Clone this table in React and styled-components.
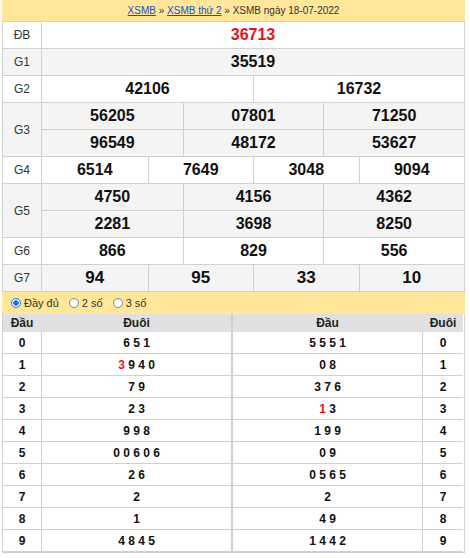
import React from 'react';
import styled, { createGlobalStyle } from 'styled-components';

const GlobalStyle = createGlobalStyle`
  body {
    margin: 0;
    background: #fff;
    font-family: "Liberation Sans", Arial, sans-serif;
  }
`;

const prizes = [
  { label: 'ĐB', rows: [['36713']], special: true },
  { label: 'G1', rows: [['35519']] },
  { label: 'G2', rows: [['42106', '16732']] },
  { label: 'G3', rows: [['56205', '07801', '71250'], ['96549', '48172', '53627']] },
  { label: 'G4', rows: [['6514', '7649', '3048', '9094']] },
  { label: 'G5', rows: [['4750', '4156', '4362'], ['2281', '3698', '8250']] },
  { label: 'G6', rows: [['866', '829', '556']] },
  { label: 'G7', rows: [['94', '95', '33', '10']], big: true },
];

// red marks the special-prize tail
const loto = [
  ['6 5 1', '5 5 5 1'],
  [[{ t: '3', red: true }, ' 9 4 0'], '0 8'],
  ['7 9', '3 7 6'],
  ['2 3', [{ t: '1', red: true }, ' 3']],
  ['9 9 8', '1 9 9'],
  ['0 0 6 0 6', '0 9'],
  ['2 6', '0 5 6 5'],
  ['2', '2'],
  ['1', '4 9'],
  ['4 8 4 5', '1 4 4 2'],
];

const App = () => (
  <>
    <GlobalStyle />
    <Wrap>
      <TopBar>
        <a href="#">XSMB</a> » <a href="#">XSMB thứ 2</a> » XSMB ngày 18-07-2022
      </TopBar>
      <Prizes>
        {prizes.map((p, i) => (
          <Prize key={p.label} $alt={i % 2 === 1}>
            <Label>{p.label}</Label>
            <Values>
              {p.rows.map((r, j) => (
                <ValueRow key={j} $cols={r.length}>
                  {r.map((v, k) => (
                    <Num key={k} $red={p.special} $big={p.big}>{v}</Num>
                  ))}
                </ValueRow>
              ))}
            </Values>
          </Prize>
        ))}
      </Prizes>
      <Options>
        <Opt><Radio $checked />Đầy đủ</Opt>
        <Opt><Radio />2 số</Opt>
        <Opt><Radio />3 số</Opt>
      </Options>
      <Loto>
        <LotoHead>Đầu</LotoHead>
        <LotoHead $mid>Đuôi</LotoHead>
        <LotoHead>Đầu</LotoHead>
        <LotoHead>Đuôi</LotoHead>
        {loto.map((row, i) => (
          <React.Fragment key={i}>
            <LotoCell>{i}</LotoCell>
            <LotoCell $mid>{renderDigits(row[0])}</LotoCell>
            <LotoCell>{renderDigits(row[1])}</LotoCell>
            <LotoCell>{i}</LotoCell>
          </React.Fragment>
        ))}
      </Loto>
    </Wrap>
  </>
);

const renderDigits = (v) =>
  typeof v === 'string'
    ? v
    : v.map((part, i) =>
        typeof part === 'string' ? part : <Red key={i}>{part.t}</Red>
      );

export default App;

const Wrap = styled.div`
  width: 463px;
  margin-left: 2px;
`;

const TopBar = styled.div`
  height: 21px;
  line-height: 22px;
  background: #ffe699;
  text-align: center;
  font-size: 10px;
  color: #333;

  a {
    color: #1a4fc4;
    text-decoration: underline;
  }
`;

const Prizes = styled.div`
  border: 1px solid #d0d0d0;
  border-bottom: none;
`;

const Prize = styled.div`
  display: grid;
  grid-template-columns: 39px 1fr;
  background: ${(p) => (p.$alt ? '#f4f4f4' : '#fff')};
  border-bottom: 1px solid #d0d0d0;
`;

const Label = styled.div`
  display: flex;
  align-items: center;
  justify-content: center;
  font-size: 12px;
  color: #333;
  border-right: 1px solid #d0d0d0;
`;

const Values = styled.div`
  display: flex;
  flex-direction: column;
`;

const ValueRow = styled.div`
  display: grid;
  grid-template-columns: repeat(${(p) => p.$cols}, 1fr);
  height: 26px;

  & + & {
    border-top: 1px solid #d0d0d0;
  }
`;

const Num = styled.div`
  display: flex;
  align-items: center;
  justify-content: center;
  font-size: ${(p) => (p.$big ? '17px' : '16px')};
  font-weight: bold;
  color: ${(p) => (p.$red ? '#e8101b' : '#111')};

  & + & {
    border-left: 1px solid #d0d0d0;
  }
`;

const Options = styled.div`
  display: flex;
  align-items: center;
  gap: 10px;
  height: 22px;
  padding-left: 9px;
  background: #ffe699;
  font-size: 11px;
  color: #333;
`;

const Opt = styled.span`
  display: flex;
  align-items: center;
  gap: 3px;
`;

const Radio = styled.span`
  box-sizing: border-box;
  width: 10px;
  height: 10px;
  border-radius: 50%;
  border: 1px solid ${(p) => (p.$checked ? '#1a73e8' : '#888')};
  background: ${(p) => (p.$checked ? 'radial-gradient(circle, #1a73e8 0 2.5px, #fff 3px)' : '#fff')};
`;

const Loto = styled.div`
  display: grid;
  grid-template-columns: 39px 191px 190px 40px;
  border: 1px solid #d0d0d0;
  border-top: none;
  width: 463px;
  box-sizing: border-box;
`;

const LotoHead = styled.div`
  height: 18px;
  line-height: 19px;
  background: #e0e0e0;
  text-align: center;
  font-size: 12px;
  font-weight: bold;
  color: #222;
  border-right: 1px solid #e0e0e0;
  ${(p) => p.$mid && 'border-right: 2px solid #d0d0d0;'}
  &:nth-child(4n) { border-right: none; }
`;

const LotoCell = styled.div`
  height: 21px;
  line-height: 22px;
  text-align: center;
  font-size: 12px;
  font-weight: bold;
  color: #111;
  border-bottom: 1px solid #d0d0d0;
  border-right: 1px solid #d0d0d0;
  ${(p) => p.$mid && 'border-right: 2px solid #d0d0d0;'}
  &:nth-child(4n) { border-right: none; }
`;

const Red = styled.span`
  color: #e8101b;
`;
